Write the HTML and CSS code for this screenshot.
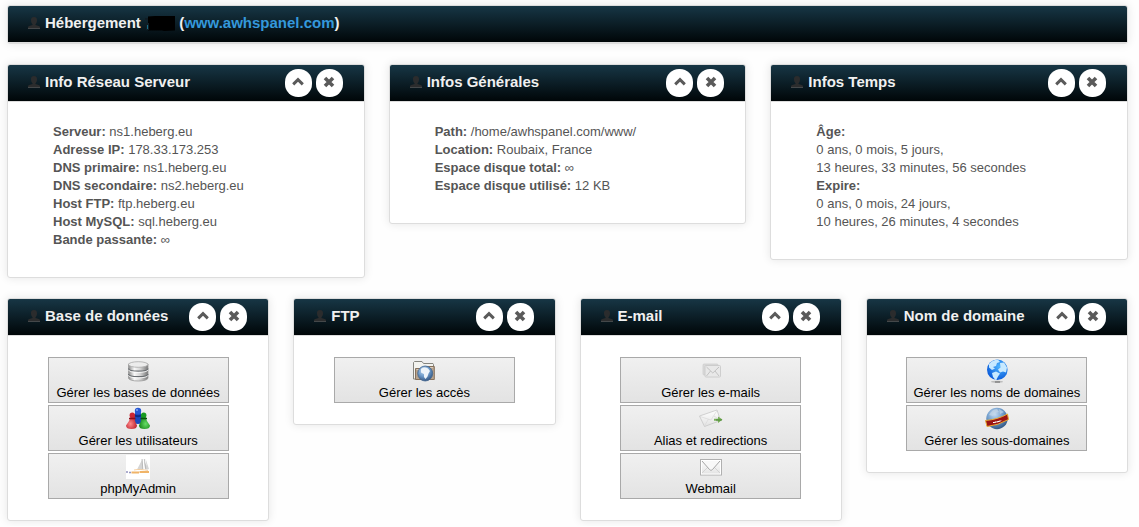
FILE: index.html
```html
<!DOCTYPE html>
<html lang="fr">
<head>
<meta charset="utf-8">
<title>Hébergement</title>
<link rel="stylesheet" href="styles.css">
</head>
<body>
<svg width="0" height="0" class="defs" aria-hidden="true">
  <defs>
    <linearGradient id="metal" x1="0" x2="1" y1="0" y2="0"><stop offset="0" stop-color="#8a8a8a"/><stop offset=".3" stop-color="#f8f8f8"/><stop offset=".6" stop-color="#d4d4d4"/><stop offset="1" stop-color="#777"/></linearGradient>
    <radialGradient id="sea" cx=".6" cy=".35" r=".7"><stop offset="0" stop-color="#4db4ff"/><stop offset="1" stop-color="#0656d8"/></radialGradient>
    <radialGradient id="steel" cx=".4" cy=".3" r=".75"><stop offset="0" stop-color="#c4dcf2"/><stop offset=".5" stop-color="#6f9ccb"/><stop offset="1" stop-color="#2c4f7c"/></radialGradient>
    <radialGradient id="red" cx=".4" cy=".6" r=".7"><stop offset="0" stop-color="#f88"/><stop offset="1" stop-color="#b01020"/></radialGradient>
    <radialGradient id="green" cx=".6" cy=".6" r=".7"><stop offset="0" stop-color="#6d6"/><stop offset="1" stop-color="#08780c"/></radialGradient>
    <linearGradient id="paper" x1="0" x2="0" y1="0" y2="1"><stop offset="0" stop-color="#fff"/><stop offset="1" stop-color="#e2e2e2"/></linearGradient>
    <symbol id="user" viewBox="0 0 12 12"><path d="M6 0C3.700 0 2.800 1.300 3 3.400c.1 1.700.6 3 1.500 3.800v.9L1.200 9C.4 9.300 0 9.700 0 10.300V12h12v-1.700c0-.6-.4-1-1.200-1.300L7.500 8.100v-.9c.9-.8 1.400-2.100 1.500-3.800C9.200 1.300 8.300 0 6 0z" fill="#2b2c2d"/><path d="M0 11.500h12" stroke="#44484a"/></symbol>
    <symbol id="up" viewBox="0 0 14 14"><path d="M2.200 9.300 7 4.700l4.800 4.600" fill="none" stroke="#5a5a5a" stroke-width="3"/></symbol>
    <symbol id="close" viewBox="0 0 14 14"><path d="m3 3 8 8m0-8-8 8" fill="none" stroke="#5a5a5a" stroke-width="3.600"/></symbol>
  </defs>
</svg>
<main class="page">
  <section class="box">
    <header class="box-head">
      <svg class="user"><use href="#user"/></svg>
      <h1 class="title">Hébergement <svg class="mask" viewBox="0 0 30 15" aria-hidden="true"><path d="M3 .5 10 0h20v14.500l-11 .500-2-.600H3z"/><path d="M0 2h3v2H0zM1 7h3v7H1z" fill="#101d25"/><path d="M2 9h1v4H2z" fill="#176a83"/></svg> (<a class="link" href="#">www.awhspanel.com</a>)</h1>
    </header>
  </section>

  <div class="row row-3">
    <section class="box">
      <header class="box-head"><svg class="user"><use href="#user"/></svg><h2 class="title">Info Réseau Serveur</h2>
        <button class="round" aria-label="Réduire"><svg><use href="#up"/></svg></button><button class="round" aria-label="Fermer"><svg><use href="#close"/></svg></button></header>
      <div class="info">
        <div><b>Serveur:</b> ns1.heberg.eu</div>
        <div><b>Adresse IP:</b> 178.33.173.253</div>
        <div><b>DNS primaire:</b> ns1.heberg.eu</div>
        <div><b>DNS secondaire:</b> ns2.heberg.eu</div>
        <div><b>Host FTP:</b> ftp.heberg.eu</div>
        <div><b>Host MySQL:</b> sql.heberg.eu</div>
        <div><b>Bande passante:</b> ∞</div>
      </div>
    </section>
    <section class="box">
      <header class="box-head"><svg class="user"><use href="#user"/></svg><h2 class="title">Infos Générales</h2>
        <button class="round" aria-label="Réduire"><svg><use href="#up"/></svg></button><button class="round" aria-label="Fermer"><svg><use href="#close"/></svg></button></header>
      <div class="info">
        <div><b>Path:</b> /home/awhspanel.com/www/</div>
        <div><b>Location:</b> Roubaix, France</div>
        <div><b>Espace disque total:</b> ∞</div>
        <div><b>Espace disque utilisé:</b> 12 KB</div>
      </div>
    </section>
    <section class="box">
      <header class="box-head"><svg class="user"><use href="#user"/></svg><h2 class="title">Infos Temps</h2>
        <button class="round" aria-label="Réduire"><svg><use href="#up"/></svg></button><button class="round" aria-label="Fermer"><svg><use href="#close"/></svg></button></header>
      <div class="info">
        <div><b>Âge:</b></div>
        <div>0 ans, 0 mois, 5 jours,</div>
        <div>13 heures, 33 minutes, 56 secondes</div>
        <div><b>Expire:</b></div>
        <div>0 ans, 0 mois, 24 jours,</div>
        <div>10 heures, 26 minutes, 4 secondes</div>
      </div>
    </section>
  </div>

  <div class="row row-4">
    <section class="box">
      <header class="box-head"><svg class="user"><use href="#user"/></svg><h2 class="title">Base de données</h2>
        <button class="round" aria-label="Réduire"><svg><use href="#up"/></svg></button><button class="round" aria-label="Fermer"><svg><use href="#close"/></svg></button></header>
      <div class="actions">
        <button class="action"><svg class="icon" viewBox="0 0 24 24">
          <path d="M2.500 5v14c0 4 19.500 4 19.500 0V5z" fill="url(#metal)" stroke="#999" stroke-width=".8"/>
          <path d="M2.500 9.500c0 3.500 19.500 3.500 19.500 0M2.500 15c0 3.500 19.500 3.500 19.500 0" fill="none" stroke="#6a6e72" stroke-width="1.200"/>
          <path d="M2.500 10.800c0 3.500 19.500 3.500 19.500 0M2.500 16.300c0 3.500 19.500 3.500 19.500 0" fill="none" stroke="#fff" stroke-width=".8"/>
          <ellipse cx="12.250" cy="5.500" rx="9.700" ry="2.800" fill="#ececec" stroke="#aaa" stroke-width=".8"/></svg>Gérer les bases de données</button>
        <button class="action"><svg class="icon" viewBox="0 0 24 24">
          <path d="M9.500 5 7 15c1 2.500 9 2.500 10 0L14.500 5z" fill="#1b49bd"/><circle cx="12" cy="4" r="3.200" fill="#2456d4"/><path d="M8 8c2 1.500 6 1.500 8 0" stroke="#0b2c86" stroke-width="2" fill="none"/><circle cx="11" cy="3" r="1" fill="#82a8f5"/>
          <path d="M4.500 9C4 13 2.500 15 0 18.500 0 21 2 22 5.500 22s5.500-1 5.500-3.500C9.500 15.500 8.500 13 8.500 9z" fill="url(#red)"/><circle cx="6.300" cy="8.300" r="2.700" fill="#cc2632"/><path d="M3 11.500h6.500" stroke="#8d0c18" stroke-width="1.500"/>
          <path d="M15.500 9c0 4-1 6.500-2.500 9.500 0 2.500 2 3.500 5.500 3.500s5.500-1 5.500-3.500c-2.500-3.500-4-5.500-4.500-9.500z" fill="url(#green)"/><circle cx="17.700" cy="8.300" r="2.700" fill="#189a20"/><path d="M14.500 11.500H21" stroke="#06520a" stroke-width="1.500"/></svg>Gérer les utilisateurs</button>
        <button class="action"><svg class="icon" viewBox="0 0 24 24">
          <path fill="#fff" d="M0 0h24v24H0z"/>
          <path d="M16.500 4 11 14.500h6zM18 6l1 8.500h3.500zM19.500 3.500 21 14h2z" fill="#d5d5d5"/><path d="m16 4 .8 10M18.300 4l1.500 10" stroke="#aaa" stroke-width=".7"/>
          <path d="M0 17h2M3 17.500h2" stroke="#9494c0" stroke-width="1.600"/><path d="M5.500 17.500H13M13.500 17h9.500" stroke="#f0b468" stroke-width="1.800"/><path d="M8 15c4-1 9-.5 14 .5" stroke="#f2c58e" fill="none" stroke-width=".8"/></svg>phpMyAdmin</button>
      </div>
    </section>
    <section class="box">
      <header class="box-head"><svg class="user"><use href="#user"/></svg><h2 class="title">FTP</h2>
        <button class="round" aria-label="Réduire"><svg><use href="#up"/></svg></button><button class="round" aria-label="Fermer"><svg><use href="#close"/></svg></button></header>
      <div class="actions">
        <button class="action"><svg class="icon" viewBox="0 0 24 24">
          <path d="M1.500 20V3.500l1-1H10l1.500 2H21l.5 1V20z" fill="#f3f3ef" stroke="#85857f"/>
          <path d="M3.500 20.500v-11h7l2-2h9.800v13z" fill="#b8a38c" stroke="#85705c"/><path d="M4.500 10.500h5M13 8.500h8" stroke="#d9cbbb"/>
          <circle cx="13.200" cy="14.500" r="7.500" fill="url(#steel)" stroke="#44668e" stroke-width=".8"/>
          <path d="M9 10c2-2 5-2 7-.5l2 2.500-1.500 2.500-1 3-2 2.500-1.500-2v-3l-3-1.500z" fill="#edf4fa"/></svg>Gérer les accès</button>
      </div>
    </section>
    <section class="box">
      <header class="box-head"><svg class="user"><use href="#user"/></svg><h2 class="title">E-mail</h2>
        <button class="round" aria-label="Réduire"><svg><use href="#up"/></svg></button><button class="round" aria-label="Fermer"><svg><use href="#close"/></svg></button></header>
      <div class="actions">
        <button class="action"><svg class="icon" viewBox="0 0 24 24">
          <rect x="4" y="5" width="15" height="11" rx="1" fill="#dadada" stroke="#ccc" stroke-width=".7"/>
          <rect x="6" y="6.500" width="15.500" height="11.500" rx="1" fill="#e8e8e8" stroke="#c6c6c6" stroke-width=".8"/>
          <path d="m7.500 8 6.300 6L20 8M7.500 17l4-5m8.500 5-4-5" fill="none" stroke="#bdbdbd" stroke-width=".9"/></svg>Gérer les e-mails</button>
        <button class="action"><svg class="icon" viewBox="0 0 24 24">
          <path d="M.5 9 18 3l3.500 10.500L5.500 19.500z" fill="url(#paper)" stroke="#c7c7c7" stroke-width=".8"/>
          <path d="m1 9.500 11 3.500 6-9.500M5.500 19l4-7m11.500 1-6-4" fill="none" stroke="#d8d8d8" stroke-width=".7"/>
          <path d="M15 11.800h4V9.500l4.500 3-4.500 3.500V13.700h-4z" fill="#7ab05c"/><path d="M17 13h6" stroke="#3d7c27" stroke-width=".8"/></svg>Alias et redirections</button>
        <button class="action"><svg class="icon" viewBox="0 0 24 24">
          <rect x="1.500" y="4.500" width="21" height="15.500" fill="url(#paper)" stroke="#b0b0b0"/><rect x="2.500" y="5.500" width="19" height="13.500" fill="none" stroke="#fff"/>
          <path d="m3 18 6-6m12 6-6-6" stroke="#d0d0d0" stroke-width=".9"/><path d="m3 6 7.500 8.500c1 1 2 1 3 0L21 6" fill="#f8f8f8" stroke="#a5a5a5"/></svg>Webmail</button>
      </div>
    </section>
    <section class="box">
      <header class="box-head"><svg class="user"><use href="#user"/></svg><h2 class="title">Nom de domaine</h2>
        <button class="round" aria-label="Réduire"><svg><use href="#up"/></svg></button><button class="round" aria-label="Fermer"><svg><use href="#close"/></svg></button></header>
      <div class="actions">
        <button class="action"><svg class="icon" viewBox="0 0 24 24">
          <ellipse cx="12" cy="22.800" rx="6" ry="1" fill="#bbb"/><path d="M10 23h5" stroke="#666"/>
          <circle cx="12.300" cy="10.700" r="10.300" fill="url(#sea)"/>
          <path d="M4 5c3-3.500 6-4.500 9-4.300L15 3l-3 1-1 3-3 1 2 1.500-3 1.500-3-2.500zm3 9 4-1.500 4 2-2 3-2 4-3-3.500zM15 4l4-.5 3 5-1 5-3-1-3 1-2-3 2.500-2z" fill="#c7e9ff"/></svg>Gérer les noms de domaines</button>
        <button class="action"><svg class="icon" viewBox="0 0 24 24">
          <circle cx="12" cy="11.500" r="10.700" fill="url(#steel)"/>
          <path d="M4 8c2-4 5-6 8-6l2 3-4 1-2 3zM14 2l5 3-4 2z" fill="#c8d8e8" opacity=".65"/>
          <path d="M.5 13.500Q13 12.500 22.500 7l1 5.500Q13 18.500 2 19.500z" fill="#9c1414" stroke="#e8aa32" stroke-width="1"/>
          <path d="m8 15 1 1 1-1.300 1 .9 1-1.300 1 .9 1-1.400 1 .8 1-1.300" fill="none" stroke="#fff" stroke-width="1"/></svg>Gérer les sous-domaines</button>
      </div>
    </section>
  </div>
</main>
</body>
</html>
```
FILE: styles.css
```css
* { box-sizing: border-box; }
body {
  margin: 0;
  background: #fefefe;
  color: #555;
  font: 13px/18px "Liberation Sans", Arial, sans-serif;
}
.defs { position: absolute; }
.page {
  display: flex;
  flex-direction: column;
  gap: 20px;
  padding: 5px 11px 5px 7px;
}
.row {
  display: grid;
  gap: 24px;
  align-items: start;
}
.row-3 { grid-template-columns: repeat(3, 1fr); }
.row-4 { grid-template-columns: repeat(4, 1fr); }
.box {
  background: #fff;
  border: 1px solid #ddd;
  border-radius: 3px;
  box-shadow: 0 0 10px rgba(0, 0, 0, 0.1);
}
.box-head {
  display: flex;
  align-items: center;
  gap: 4px;
  height: 37px;
  padding: 0 21px 0 20px;
  border-bottom: 1px solid #ddd;
  border-radius: 2px 2px 0 0;
  background: linear-gradient(#173645, #000608) padding-box;
}
.user {
  flex: none;
  width: 12px;
  height: 12px;
  margin-bottom: 2px;
}
.title {
  flex: 1;
  margin: 0 0 2px 1px;
  color: #f0f0f0;
  font-size: 15px;
  line-height: 20px;
  white-space: nowrap;
}
.link { color: #3498db; text-decoration: none; }
.mask { width: 30px; height: 15px; vertical-align: -3px; }
.round {
  display: flex;
  flex: none;
  align-items: center;
  justify-content: center;
  width: 27px;
  height: 28px;
  padding: 0 0 2px;
  border: 0;
  border-radius: 13px;
  background: #fff;
}
.round svg { width: 14px; height: 14px; }
.info { padding: 21px 20px 28px 45px; }
.actions {
  display: flex;
  flex-direction: column;
  align-items: center;
  gap: 2px;
  padding: 21px 20px;
}
.action {
  display: flex;
  flex-direction: column;
  align-items: center;
  gap: 1px;
  width: 181px;
  padding: 1px 0 0;
  border: 1px solid #a9a9a9;
  background: linear-gradient(#f0f0f0, #e3e3e3);
  color: #000;
  font: inherit;
  white-space: nowrap;
}
.icon { width: 24px; height: 24px; }
```
